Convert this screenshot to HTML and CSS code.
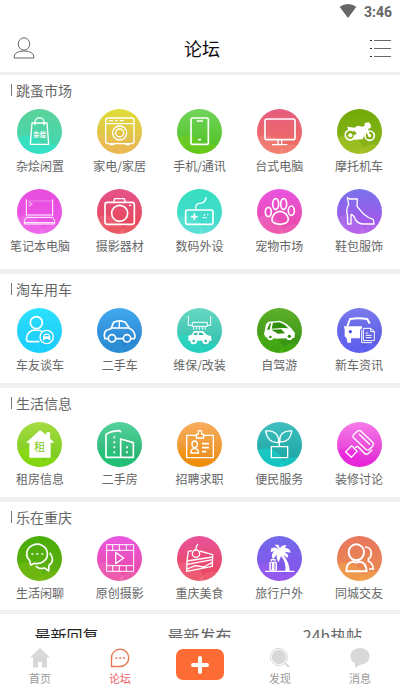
FILE: index.html
```html
<!DOCTYPE html>
<html lang="zh-CN">
<head>
<meta charset="UTF-8">
<meta name="viewport" content="width=device-width, initial-scale=1.0">
<title>论坛</title>
<link rel="stylesheet" href="styles.css">
</head>
<body>
<header class="header">
  <div class="status">
    <svg class="wifi" viewBox="0 0 18 15"><path d="M0 3Q9-3 18 3L9 15z"/></svg>
    <span>3:46</span>
  </div>
  <div class="titlebar">
    <button class="bar-btn" aria-label="我的">
      <svg viewBox="0 0 22 24"><ellipse cx="11" cy="8" rx="5.7" ry="6.2"/><path d="M1 22Q1 15 11 15T21 22z"/></svg>
    </button>
    <h1>论坛</h1>
    <button class="bar-btn" aria-label="菜单">
      <svg viewBox="0 0 22 24"><path d="M5 4.5h17M5 12.5h17M5 20.5h17"/><path class="dots" d="M1 4.5h2M1 12.5h2M1 20.5h2"/></svg>
    </button>
  </div>
</header>

<main class="content">
  <section class="group tall">
    <h2>跳蚤市场</h2>
    <div class="grid">
      <a class="item" href="#">
        <span class="icon bag"><svg viewBox="0 0 135 135"><path d="M45 42H90L95 106H40zM54 49V38a13 11 0 0 1 27 0V49"/><text class="bag-text" x="68" y="83">杂烩</text></svg></span>
        <span>杂烩闲置</span>
      </a>
      <a class="item" href="#">
        <span class="icon washer"><svg viewBox="0 0 135 135"><rect x="26" y="27" width="85" height="77" rx="7"/><path d="M26 44H111M36 35H48M54 35H62M68 35H80M38 107H52M85 107H98"/><circle cx="68" cy="72" r="21"/><circle cx="68" cy="72" r="12"/></svg></span>
        <span>家电/家居</span>
      </a>
      <a class="item" href="#">
        <span class="icon phone"><svg viewBox="0 0 135 135"><rect class="bold" x="42" y="27" width="52" height="79" rx="5"/><path class="bold" d="M59 36H78M64 92H72"/></svg></span>
        <span>手机/通讯</span>
      </a>
      <a class="item" href="#">
        <span class="icon desktop"><svg viewBox="0 0 135 135"><rect class="bold" x="24" y="30" width="90" height="62" rx="6"/><path d="M63 93V106M74 93V106M45 107H91"/></svg></span>
        <span>台式电脑</span>
      </a>
      <a class="item" href="#">
        <span class="icon moto"><svg viewBox="0 0 135 135"><path class="fill" d="M30 53L52 56 62 50 77 53 84 49 82 42 96 40 102 49 101 57 93 60 99 78 94 80 86 68 77 91 50 92 49 80 60 73 48 64 34 62z"/><path class="bold" d="M49 66A15 15 0 1 0 54 82"/><circle class="bold" cx="98" cy="80" r="14"/><circle class="fill" cx="40" cy="79" r="6"/><circle class="fill" cx="98" cy="80" r="5"/></svg></span>
        <span>摩托机车</span>
      </a>
      <a class="item" href="#">
        <span class="icon laptop"><svg viewBox="0 0 135 135"><path class="fine" d="M28 31V81M107 31V81M31 78H104M28 85H107M28 85L22 94V105H113V94L107 85M22 101H113M37 52L46 42M36 44L40 39"/><path class="thin" d="M31 36H104"/></svg></span>
        <span>笔记本电脑</span>
      </a>
      <a class="item" href="#">
        <span class="icon camera"><svg viewBox="0 0 135 135"><rect class="bold" x="24" y="40" width="88" height="66" rx="7"/><path d="M50 39L53 29H82L85 39M96 49H102"/><circle class="bold" cx="68" cy="73" r="24"/></svg></span>
        <span>摄影器材</span>
      </a>
      <a class="item" href="#">
        <span class="icon gamepad"><svg viewBox="0 0 135 135"><rect class="bold" x="26" y="63" width="82" height="43" rx="6"/><path d="M57 62Q53 44 68 43 87 42 87 24"/><path class="bold" d="M42 83H62M52 73V93"/><path d="M77 86h5M84 86h5M80 78h4M90 77h4"/></svg></span>
        <span>数码外设</span>
      </a>
      <a class="item" href="#">
        <span class="icon paw"><svg viewBox="0 0 135 135"><ellipse class="bold" cx="56" cy="45" rx="9" ry="16"/><ellipse class="bold" cx="80" cy="45" rx="9" ry="16"/><ellipse class="bold" cx="34" cy="69" rx="9" ry="14"/><ellipse class="bold" cx="103" cy="65" rx="9" ry="14"/><path class="bold" d="M69 67C82 67 92 79 94 88 95 99 87 106 69 106S43 99 45 88C47 79 56 67 69 67z"/></svg></span>
        <span>宠物市场</span>
      </a>
      <a class="item" href="#">
        <span class="icon shoe"><svg viewBox="0 0 135 135"><path d="M31 26L38 30 61 30 60 52Q70 64 79 74 96 88 109 91L111 105H77Q62 103 55 91 51 78 42 76V105H32Q32 76 29 66 29 56 35 46z"/></svg></span>
        <span>鞋包服饰</span>
      </a>
    </div>
  </section>

  <section class="group">
    <h2>淘车用车</h2>
    <div class="grid">
      <a class="item" href="#">
        <span class="icon friend"><svg viewBox="0 0 135 135"><circle class="bold" cx="58" cy="44" r="18"/><path class="bold" d="M67 101H36Q28 101 28 91C31 73 42 66 56 66Q70 66 76 71"/><circle cx="89" cy="87" r="20"/><path class="fill" d="M78 85L83 77H95L100 85V97H95V93H83V97H78z"/><path class="cut" d="M84 81H94L96 85H82z"/></svg></span>
        <span>车友谈车</span>
      </a>
      <a class="item" href="#">
        <span class="icon used-car"><svg viewBox="0 0 135 135"><path class="bold" d="M33 92H24Q18 73 30 66L42 62 50 43Q68 34 85 43L97 61Q113 68 114 86L112 92H102M57 92H78"/><path d="M42 60H97M67 39V60"/><circle class="bold" cx="45" cy="91" r="11"/><circle class="bold" cx="90" cy="91" r="11"/></svg></span>
        <span>二手车</span>
      </a>
      <a class="item" href="#">
        <span class="icon repair"><svg viewBox="0 0 135 135"><path class="fine" d="M34 24V52H46M101 24V52H91M46 43H91V55H46zM50 56V65M58 56V65M67 56V65M76 56V65M84 56V65"/><path class="fill" d="M34 83L43 81 51 69H78L90 81 102 84 104 98H34z"/><path class="cut" d="M53 74H61V81H49zM66 74H75L81 81H66z"/><circle class="fill" cx="50" cy="99" r="10"/><circle class="fill" cx="86" cy="99" r="10"/><circle class="cut" cx="50" cy="99" r="4"/><circle class="cut" cx="86" cy="99" r="4"/></svg></span>
        <span>维保/改装</span>
      </a>
      <a class="item" href="#">
        <span class="icon trip"><svg viewBox="0 0 135 135"><path class="fill" d="M27 49L34 41 69 38 88 47 103 61 114 75 112 90H98L60 92 26 88 21 78z"/><path class="cut" d="M38 46H42L38 65H30zM48 44L68 43 83 50 94 61 74 60 44 62zM43 65L73 64 84 76 63 77z"/><circle class="fill" cx="40" cy="88" r="9"/><circle class="fill" cx="97" cy="86" r="10"/><circle class="cut" cx="40" cy="87" r="4"/><circle class="cut" cx="97" cy="85" r="5"/></svg></span>
        <span>自驾游</span>
      </a>
      <a class="item" href="#">
        <span class="icon news"><svg viewBox="0 0 135 135"><path class="heavy" d="M31 56L39 33Q66 28 91 33L98 47"/><path class="fill" d="M20 55H75V61L69 66V91H42V104H31L29 91 23 85V62z"/><circle class="cut" cx="40" cy="71" r="5"/><path class="fine" d="M79 61H101L112 70V98H79zM101 61V71H112M86 75H94M86 82H104M86 89H104"/><path class="fine" d="M74 66V104H105"/></svg></span>
        <span>新车资讯</span>
      </a>
    </div>
  </section>

  <section class="group">
    <h2>生活信息</h2>
    <div class="grid">
      <a class="item" href="#">
        <span class="icon rent"><svg viewBox="0 0 135 135"><path class="fill" d="M69 24L88 39V31H99V49L112 62H101V107H37V62H27z"/><text class="rent-text" x="68" y="87">租</text></svg></span>
        <span>租房信息</span>
      </a>
      <a class="item" href="#">
        <span class="icon building"><svg viewBox="0 0 135 135"><path class="bold" d="M27 107V37Q43 27 68 26L72 31M71 106V51L109 62V106H27"/><path class="bold dash" d="M52 43V97"/><path class="bold dash" d="M90 73V97"/></svg></span>
        <span>二手房</span>
      </a>
      <a class="item" href="#">
        <span class="icon job"><svg viewBox="0 0 135 135"><path d="M58 40H29V107H109V40H80M58 48V37H64Q62 25 69 25T74 37H80V48z"/><ellipse cx="53" cy="67" rx="8" ry="10"/><path d="M41 93Q42 80 53 79 64 80 65 93z"/><path class="bold" d="M75 65H96M75 77H96M75 89H88"/></svg></span>
        <span>招聘求职</span>
      </a>
      <a class="item" href="#">
        <span class="icon plant"><svg viewBox="0 0 135 135"><path d="M43 74H92V107H43zM67 74V48M65 61C42 65 29 48 26 27 51 24 66 36 65 61zM69 59C66 37 81 25 104 27 101 50 88 62 69 59"/></svg></span>
        <span>便民服务</span>
      </a>
      <a class="item" href="#">
        <span class="icon brush"><svg viewBox="0 0 135 135"><path d="M62 27L69 25 109 63 108 72 95 84 88 83 48 46 49 39zM66 36L99 68M44 71L60 88 43 106 26 89zM54 77L62 73 84 96H92L106 83"/></svg></span>
        <span>装修讨论</span>
      </a>
    </div>
  </section>

  <section class="group last">
    <h2>乐在重庆</h2>
    <div class="grid">
      <a class="item" href="#">
        <span class="icon chat"><svg viewBox="0 0 135 135"><path class="bold" d="M38 74A31 29 0 1 1 53 82L41 87zM98 50C110 65 109 79 96 88L95 105 83 96Q67 101 56 90"/><path class="bold" d="M43 54h6M58 54h6M73 54h6"/></svg></span>
        <span>生活闲聊</span>
      </a>
      <a class="item" href="#">
        <span class="icon film"><svg viewBox="0 0 135 135"><path class="fine" d="M29 26H110V106H29zM29 43H110M29 89H110M47 26V43M67 26V43M88 26V43M47 89V106M67 89V106M88 89V106"/><path d="M56 49V83L80 66z"/></svg></span>
        <span>原创摄影</span>
      </a>
      <a class="item" href="#">
        <span class="icon cake"><svg viewBox="0 0 135 135"><path d="M30 75L34 46 45 44M68 45L107 56 106 91 29 106 30 75 107 63M30 85L107 71M30 99L56 89 80 93 106 79"/><circle cx="57" cy="53" r="11"/><path d="M56 41Q57 31 63 24"/></svg></span>
        <span>重庆美食</span>
      </a>
      <a class="item" href="#">
        <span class="icon palm"><svg viewBox="0 0 135 135"><path class="fill" d="M68 41Q54 31 43 37L41 49 52 45Q39 58 48 70L60 56Q57 69 65 79L72 60Q88 78 85 105H98Q98 80 78 56L91 66 94 58 83 47 101 50Q99 36 84 36L88 28Q75 25 69 37L64 26 53 26z"/><rect class="fill" x="37" y="77" width="23" height="27" rx="4"/><path d="M43 76V71H54V76M24 106H112"/><path class="stripe" d="M43 80V101M54 80V101"/></svg></span>
        <span>旅行户外</span>
      </a>
      <a class="item" href="#">
        <span class="icon social"><svg viewBox="0 0 135 135"><ellipse class="heavy" cx="58" cy="49" rx="23" ry="24"/><path class="heavy" d="M28 106Q28 79 47 77Q58 82 69 77Q88 80 89 106z"/><path class="bold" d="M84 33C109 34 105 62 94 69V76Q108 82 109 99H96"/></svg></span>
        <span>同城交友</span>
      </a>
    </div>
  </section>

  <div class="tabs">
    <button class="tab active">最新回复</button>
    <button class="tab">最新发布</button>
    <button class="tab">24h热帖</button>
  </div>
</main>

<nav class="nav">
  <a href="#">
    <svg viewBox="0 0 20 20"><path d="M10 0L20 9.5H17V18.500Q17 19.500 16 19.500H12V14H8V19.500H4Q3 19.500 3 18.500V9.500H0z"/></svg>
    <span>首页</span>
  </a>
  <a class="current" href="#">
    <svg viewBox="0 0 20 20"><path class="line" d="M1.500 18.500V10A8.600 8.600 0 1 1 10 18.500z"/><path class="line" d="M5.500 10h2M9.200 10h2M12.900 10h2"/></svg>
    <span>论坛</span>
  </a>
  <button class="add" aria-label="发布">
    <svg viewBox="0 0 18 18"><path d="M9 2V16M2 9H16"/></svg>
  </button>
  <a href="#">
    <svg viewBox="0 0 20 20"><circle cx="9" cy="9" r="7.200"/><circle class="ring" cx="9" cy="9" r="8.600"/><path class="handle" d="M15 15L19 19"/></svg>
    <span>发现</span>
  </a>
  <a href="#">
    <svg viewBox="0 0 20 20"><path d="M10 0C15.500 0 19.500 3.600 19.500 8.200S16 16 11 16.400L5 19.500V15.500Q.5 12.700.5 8.200C.5 3.600 4.500 0 10 0z"/></svg>
    <span>消息</span>
  </a>
</nav>
</body>
</html>
```

FILE: styles.css
```css
* {
  box-sizing: border-box;
}
body {
  margin: 0;
  height: 100vh;
  display: flex;
  flex-direction: column;
  background-color: #fff;
  color: #666;
  font-family: "Noto Sans CJK SC", sans-serif;
  font-size: 12px;
}
a {
  color: inherit;
  text-decoration: none;
}
button {
  border: none;
  padding: 0;
  background: none;
  color: inherit;
  font-family: inherit;
  cursor: pointer;
}
svg {
  display: block;
}

/* header */
.header {
  flex: none;
  border-bottom: 3px solid #efefef;
}
.status {
  height: 24px;
  padding-right: 8px;
  display: flex;
  justify-content: flex-end;
  align-items: center;
  gap: 7px;
  font: 700 14px/24px Roboto, sans-serif;
}
.wifi {
  width: 18px;
  height: 14px;
  margin-bottom: 2px;
  fill: #666;
}
.titlebar {
  height: 48px;
  padding: 0 9px 0 13px;
  display: flex;
  justify-content: space-between;
  align-items: center;
}
.titlebar h1 {
  margin: 0;
  color: #111;
  font-size: 18px;
  font-weight: 400;
}
.bar-btn svg {
  width: 22px;
  height: 24px;
  fill: none;
  stroke: #666;
  stroke-width: 1;
}
.bar-btn .dots {
  stroke: #222;
}

/* forum groups */
.content {
  flex: 1;
  min-height: 0;
  overflow-y: auto;
  scrollbar-width: none;
}
.group {
  padding-bottom: 7px;
  border-bottom: 5px solid #f0f0f0;
}
.group.tall {
  padding-bottom: 12px;
}
.group.last {
  padding-bottom: 6px;
  border-bottom-width: 4px;
}
.group h2 {
  margin: 0 0 4px;
  padding-left: 11px;
  display: flex;
  align-items: center;
  gap: 4px;
  font-size: 14px;
  font-weight: 400;
  line-height: 30px;
}
.group h2::before {
  content: "";
  width: 1px;
  height: 12px;
  background-color: #777;
}
.grid {
  display: grid;
  grid-template-columns: repeat(5, 1fr);
  row-gap: 12px;
  padding-right: 1px;
}
.item {
  display: flex;
  flex-direction: column;
  align-items: center;
  gap: 1px;
  line-height: 22px;
  white-space: nowrap;
}
.icon {
  width: 45px;
  height: 45px;
  border-radius: 50%;
  overflow: hidden;
  background:
    radial-gradient(circle at 9px 44px, var(--glow) 17px, transparent 18px),
    radial-gradient(circle at 36px 51px, var(--glow) 15px, transparent 16px),
    linear-gradient(var(--from), var(--to));
  --glow: rgba(255, 255, 255, 0.1);
}
.icon svg {
  width: 45px;
  height: 45px;
  fill: none;
  stroke: #fff;
  stroke-width: 4;
  stroke-linejoin: round;
}
.icon .thin { stroke-width: 1; }
.icon .fine { stroke-width: 3; }
.icon .bold { stroke-width: 5; }
.icon .heavy { stroke-width: 6; }
.icon .dash { stroke-dasharray: 6 9; }
.icon .fill { fill: #fff; stroke: none; }
.icon .cut { fill: var(--to); stroke: none; }
.icon .stripe { stroke: var(--to); stroke-width: 3; }
.icon text {
  stroke: none;
  text-anchor: middle;
}
.bag-text {
  fill: #fff;
  font-size: 19px;
  font-weight: 700;
}
.rent-text {
  fill: #83cb22;
  font-size: 34px;
}

.bag { --from: #5cd29a; --to: #3ed8b4; --glow: rgba(40, 232, 212, 0.5); }
.washer { --from: #dfdc38; --to: #e6b254; --glow: rgba(240, 190, 80, 0.4); }
.phone { --from: #71d55c; --to: #4fbe1e; --glow: rgba(130, 210, 20, 0.4); }
.desktop { --from: #e65c80; --to: #f0705c; }
.moto { --from: #70aa08; --to: #8eb61c; --glow: rgba(200, 210, 50, 0.3); }
.laptop { --from: #e74ede; --to: #ed55e8; }
.camera { --from: #e5528a; --to: #ea454e; }
.gamepad { --from: #36dec0; --to: #48dcd2; }
.paw { --from: #e955e0; --to: #ea46a2; }
.shoe { --from: #7972ec; --to: #b050e8; }
.friend { --from: #2ae2fc; --to: #1ec4fa; --glow: rgba(20, 220, 255, 0.4); }
.used-car { --from: #42aaf0; --to: #237bc8; --glow: rgba(50, 160, 225, 0.4); }
.repair { --from: #68d8c2; --to: #28bcac; --glow: rgba(30, 225, 205, 0.5); }
.trip { --from: #5eb02c; --to: #308e0c; --glow: rgba(80, 195, 20, 0.4); }
.news { --from: #7a7bec; --to: #5252e2; --glow: rgba(110, 110, 255, 0.4); }
.rent { --from: #a5dc42; --to: #70c814; --glow: rgba(145, 225, 10, 0.5); }
.building { --from: #54d29c; --to: #1cac66; --glow: rgba(30, 205, 125, 0.5); }
.job { --from: #f8ad5c; --to: #e88a14; --glow: rgba(245, 145, 5, 0.5); }
.plant { --from: #40bfc0; --to: #16a2a0; --glow: rgba(20, 215, 210, 0.6); }
.brush { --from: #f77ae9; --to: #dd26cf; --glow: rgba(240, 30, 225, 0.5); }
.chat { --from: #48ae0a; --to: #62b010; --glow: rgba(145, 200, 20, 0.3); }
.film { --from: #e958e2; --to: #ea469c; }
.cake { --from: #e8529a; --to: #ec4558; }
.palm { --from: #716aec; --to: #8a50e8; --glow: rgba(180, 100, 245, 0.3); }
.social { --from: #e8765e; --to: #ea8d50; --glow: rgba(245, 175, 70, 0.4); }

/* list tabs */
.tabs {
  display: flex;
  padding-right: 1px;
}
.tab {
  flex: 1;
  font-size: 16px;
  line-height: 42px;
}
.tab.active {
  color: #222;
}

/* bottom navigation */
.nav {
  flex: none;
  height: 52px;
  padding-top: 10px;
  display: flex;
  align-items: flex-start;
  background-color: #fff;
  color: #999;
  font-size: 11px;
  line-height: 16px;
}
.nav a {
  flex: 1;
  display: flex;
  flex-direction: column;
  align-items: center;
  gap: 2px;
}
.nav a svg {
  width: 20px;
  height: 20px;
  fill: #d8d8d8;
}
.nav .line {
  fill: none;
  stroke: #e57850;
  stroke-width: 1.4;
}
.nav .ring,
.nav .handle {
  fill: none;
  stroke: #d8d8d8;
}
.nav .handle {
  stroke-width: 2;
}
.nav .current {
  color: #e85d63;
}
.add {
  width: 48px;
  height: 31px;
  margin: 1px 16px 0;
  display: flex;
  justify-content: center;
  align-items: center;
  border-radius: 7px;
  background-color: #fc6c34;
}
.add svg {
  width: 18px;
  height: 18px;
  stroke: #fff;
  stroke-width: 4;
  stroke-linecap: round;
}
```
